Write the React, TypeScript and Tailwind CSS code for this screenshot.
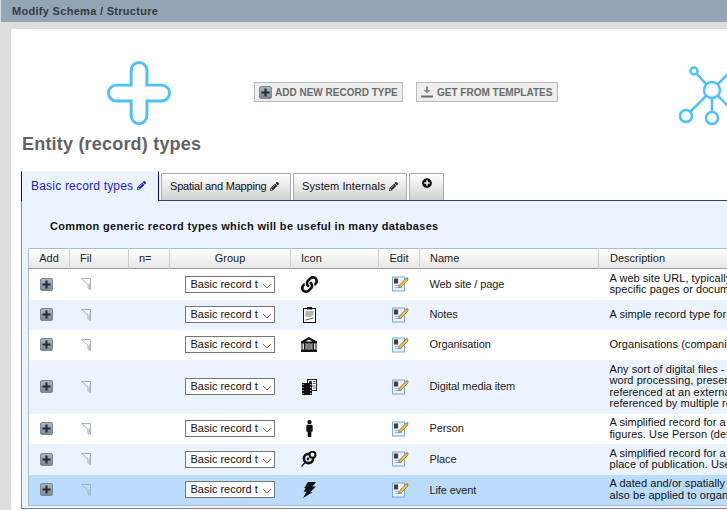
import React from "react";
import { FaLink, FaPencilAlt, FaPlusCircle, FaMale } from "react-icons/fa";

const AddIcon = ({ cls = "" }: { cls?: string }) => (
  <span className={`inline-flex w-[13px] h-[13px] shrink-0 items-center justify-center rounded-[2px] border border-[#7b8794] bg-gradient-to-b from-[#aab4bd] to-[#7f8a95] ${cls}`}>
    <svg width="9" height="9" viewBox="0 0 9 9"><path d="M3.5 0.5h2v3h3v2h-3v3h-2v-3h-3v-2h3z" fill="#1f2a33" /></svg>
  </span>
);

const FilterIcon = () => (
  <svg width="12" height="14" viewBox="0 0 12 14" className="block">
    <path d="M1.5 1.5H10.5V12.5L8 11V7.5L1.5 1.5Z" fill="none" stroke="#a3b4bb" strokeWidth="1" />
    <path d="M8.5 7.5L10 5V12L8.5 11Z" fill="#b4c5c9" />
  </svg>
);

const EditIcon = () => (
  <svg width="17" height="16" viewBox="0 0.5 17 16" className="block">
    <rect x="0.5" y="1.5" width="12" height="14" fill="#e6f0fa" stroke="#7fa9d0" />
    <rect x="2" y="3" width="4" height="5" fill="#4a3a38" />
    <path d="M3 10h7M3 12h7" stroke="#9db8d0" />
    <path d="M7 10L14 2.5L16 4.5L9 11.5L6.5 12Z" fill="#f0c040" stroke="#6d6140" strokeWidth="0.6" />
    <path d="M14 2.5L15 1.2L16.6 2.8L16 4.5Z" fill="#8a8f98" />
  </svg>
);

const NotesIcon = () => (
  <svg width="13" height="16" viewBox="0 0 13 16" className="block">
    <rect x="0.5" y="1.5" width="12" height="14" fill="#fff" stroke="#111" />
    <rect x="4" y="0" width="5" height="2.5" fill="#111" />
    <path d="M2.5 5h8M2.5 7h8M2.5 9h6" stroke="#666" />
    <path d="M2.5 13l8-2" stroke="#555" />
  </svg>
);

const BankIcon = () => (
  <svg width="16" height="15" viewBox="0 0 16 15" className="block">
    <path d="M8 0L16 4.6V6H0V4.6Z" fill="#111" />
    <path d="M8 2.4L11.5 4.4H4.5Z" fill="#fff" />
    <path d="M1 6H3.4V13H1ZM4.9 6H7V13H4.9ZM9 6H11.1V13H9ZM12.6 6H15V13H12.6Z" fill="#fff" stroke="#111" strokeWidth="1.1" />
    <rect x="0" y="13" width="16" height="2" fill="#111" />
  </svg>
);

const MediaIcon = () => (
  <svg width="15" height="16" viewBox="0 0 15 16" className="block">
    <rect x="5.5" y="0.5" width="9" height="11" fill="#fff" stroke="#222" />
    <rect x="7" y="2" width="3" height="3" fill="#333" />
    <path d="M11 2.5h2.5M11 4.5h2.5M7 7h6.5M11 9h2.5" stroke="#555" />
    <rect x="0" y="4" width="10" height="12" fill="#111" />
    <path d="M1 5v1M1 8v1M1 11v1M1 14v1M8.8 5v1M8.8 8v1M8.8 11v1M8.8 14v1" stroke="#fff" />
  </svg>
);

const PlaceIcon = () => (
  <svg width="16" height="16" viewBox="0 0 16 16" className="block">
    <circle cx="7.5" cy="7.5" r="4.6" fill="none" stroke="#111" strokeWidth="2.6" />
    <circle cx="11.5" cy="3.8" r="3" fill="#fff" stroke="#111" strokeWidth="2" />
    <circle cx="7" cy="8" r="1.4" fill="#111" />
    <path d="M4.5 11L0.5 15.5" stroke="#111" strokeWidth="1.2" />
  </svg>
);

const BoltIcon = () => (
  <svg width="13" height="16" viewBox="0 0 13 16" className="block">
    <path d="M5 0H13L9.4 4.4H13L7 10.2H9.6L0 16L3.6 9.8H0.6L2.6 6H1.2Z" fill="#111" />
  </svg>
);

const PlusOutline = () => (
  <svg width="64" height="64" viewBox="0 0 64 64" className="block shrink-0">
    <path
      d="M24 9a8 8 0 0 1 16 0V24H55a8 8 0 0 1 0 16H40V55a8 8 0 0 1-16 0V40H9a8 8 0 0 1 0-16H24Z"
      fill="none" stroke="#4dc0ff" strokeWidth="3" transform="translate(0.5 0.5) scale(0.985)"
    />
  </svg>
);

const NetworkIcon = () => (
  <svg width="70" height="64" viewBox="0 0 70 64" className="block shrink-0">
    <g fill="none" stroke="#4dc0ff" strokeWidth="2.5">
      <circle cx="34" cy="29" r="8" />
      <circle cx="16" cy="10" r="3.5" />
      <circle cx="8" cy="55" r="6" />
      <circle cx="34" cy="57" r="6" />
      <path d="M19 13L28 23M12.5 50.5L28 35M34 37V51M40 23L52 11M40 35L52 47" />
    </g>
  </svg>
);

const rows: { h: string; name: string; icon: React.ReactNode; desc: string[]; cls: string }[] = [
  { h: "h-[31px]", name: "Web site / page", icon: <FaLink size={17} color="#111" />, cls: "bg-white", desc: ["A web site URL, typically a home page, but may also be used for", "specific pages or documents on the web"] },
  { h: "h-[30px]", name: "Notes", icon: <NotesIcon />, cls: "bg-[#ebf4fe]", desc: ["A simple record type for taking notes"] },
  { h: "h-[30px]", name: "Organisation", icon: <BankIcon />, cls: "bg-white", desc: ["Organisations (companies, universities, agencies, groups)"] },
  { h: "h-[54px]", name: "Digital media item", icon: <MediaIcon />, cls: "bg-[#ebf4fe]", desc: ["Any sort of digital files - images, video, audio, PDF documents,", "word processing, presentations and other formats, either uploaded", "referenced at an external URL, which can then be", "referenced by multiple records"] },
  { h: "h-[30px]", name: "Person", icon: <FaMale size={17} color="#111" />, cls: "bg-white", desc: ["A simplified record for a person, suitable for most historical", "figures. Use Person (detailed) for more complex needs"] },
  { h: "h-[31px]", name: "Place", icon: <PlaceIcon />, cls: "bg-[#ebf4fe]", desc: ["A simplified record for a place, such as a place of birth or", "place of publication. Use Place (detailed) for more"] },
  { h: "h-[31px]", name: "Life event", icon: <BoltIcon />, cls: "bg-[#bbdcfc]", desc: ["A dated and/or spatially located event in a person's life, which can", "also be applied to organisations"] },
];

const headers: [string, string, string][] = [
  ["Add", "w-[41px]", "text-center"],
  ["Fil", "w-[59px]", "text-left pl-[10px]"],
  ["n=", "w-[41px]", "text-left pl-[10px]"],
  ["Group", "w-[121px]", "text-center"],
  ["Icon", "w-[88px]", "text-left pl-[10px]"],
  ["Edit", "w-[41px]", "text-center"],
  ["Name", "w-[179px]", "text-left pl-[10px]"],
  ["Description", "w-[500px]", "text-left pl-[11px]"],
];

const Tab = ({ label, w, track }: { label: string; w: string; track: string }) => (
  <div className={`${w} h-[28px] mb-[-1px] flex items-center pl-[8px] pb-[2px] gap-[3px] border border-b-0 border-[#aaaaaa] bg-gradient-to-b from-white to-[#cfcfcf] text-[11px] text-[#111] ${track}`}>
    <span>{label}</span>
    <FaPencilAlt size={9} color="#222" />
  </div>
);

export default function App() {
  return (
    <div className="w-[727px] h-[510px] overflow-hidden bg-[#dedede] font-['Liberation_Sans',Arial,sans-serif]">
      <div className="pl-px bg-[#dedede]">
        <div className="h-[22px] bg-[#94a5b5] pl-[11px] flex items-center text-[11px] font-bold tracking-[0.3px] text-[#333a42]">
          Modify Schema / Structure
        </div>
      </div>
      <div className="mt-[7px] ml-[11px] h-[481px] w-[800px] bg-white pl-[10px]">
        <div className="flex items-start h-[104px] pt-[32px] w-[790px]">
          <div className="ml-[86px]"><PlusOutline /></div>
          <div className="ml-[83px] mt-[21px] flex gap-[13px]">
            <button className="w-[149px] h-[20px] border border-[#bbbbbb] bg-[#eeeeee] flex items-center pl-[4px] gap-[3px] text-[10px] font-bold text-[#6b6b6b] whitespace-nowrap">
              <AddIcon /> <span>ADD NEW RECORD TYPE</span>
            </button>
            <button className="w-[142px] h-[20px] border border-[#bbbbbb] bg-[#eeeeee] flex items-center pl-[4px] gap-[4px] text-[10px] font-bold text-[#6b6b6b] whitespace-nowrap">
              <svg width="12" height="12" viewBox="0 0 12 12" className="shrink-0"><path d="M5 0.5h2V4h2.5L6 7.5 2.5 4H5Z" fill="#8a8a8a" /><rect y="9.5" width="12" height="2" fill="#6d6d6d" /></svg>
              <span>GET FROM TEMPLATES</span>
            </button>
          </div>
          <div className="ml-[120px]"><NetworkIcon /></div>
        </div>
        <h1 className="h-[37px] pl-px text-[18px] leading-[22px] font-bold tracking-[0.2px] text-[#626268]">Entity (record) types</h1>
        <div className="flex items-end gap-[2px] h-[30px] relative">
          <div className="w-[138px] h-[30px] mb-[-1px] relative z-10 flex items-center pl-[9px] gap-[4px] pb-[2px] border border-[#0000cc] border-t-[#ebf4fe] border-b-0 bg-[#ebf4fe] text-[12px] text-[#1a1ae6] tracking-[0.2px]">
            <span>Basic record types</span>
            <FaPencilAlt size={9} color="#1a1ae6" />
          </div>
          <Tab label="Spatial and Mapping" w="w-[130px]" track="tracking-[-0.2px]" />
          <Tab label="System Internals" w="w-[114px]" track="tracking-[0.1px]" />
          <div className="w-[35px] h-[28px] mb-[-1px] flex justify-center pt-[4px] border border-b-0 border-[#aaaaaa] bg-gradient-to-b from-white to-[#cfcfcf]">
            <FaPlusCircle size={10} color="#111" />
          </div>
        </div>
        <div className="relative w-[779px] border-t border-t-[#30415a] border-l border-b border-l-[#8a8f96] border-b-[#808080] bg-[#ebf4fe] pl-[6px] h-[309px]">
          <div className="h-[47px] pl-[22px] pt-[18px] text-[11px] leading-[14px] font-bold text-[#111] tracking-[0.33px]">
            Common generic record types which will be useful in many databases
          </div>
          <table className="table-fixed w-[1071px] border-collapse border border-[#a9bcd0] text-[11px] text-[#222]">
            <thead>
              <tr className="h-[20px] bg-gradient-to-b from-white to-[#e6e6e6] border-b border-[#999999]">
                {headers.map(([t, w, a]) => (
                  <th key={t} className={`${w} ${a} font-normal border-r border-[#cccccc] p-0`}>{t}</th>
                ))}
              </tr>
            </thead>
            <tbody>
              {rows.map((r) => (
                <tr key={r.name} className={`${r.h} ${r.cls}`}>
                  <td className="p-0 pr-[6px]"><div className="flex justify-center"><AddIcon /></div></td>
                  <td className="p-0 pl-[10px]"><FilterIcon /></td>
                  <td className="p-0"></td>
                  <td className="p-0">
                    <div className="relative w-[90px] ml-[15px]">
                      <select defaultValue="b" className="block w-[90px] h-[17px] appearance-none rounded-none border border-[#767676] bg-white pl-[5px] pr-[16px] text-[11px] text-[#111] leading-[15px]">
                        <option value="b">Basic record types</option>
                      </select>
                      <svg width="10" height="6" viewBox="0 0 10 6" className="absolute right-[3px] top-[7px] pointer-events-none"><path d="M1 1l4 4 4-4" fill="none" stroke="#555" strokeWidth="0.9" /></svg>
                    </div>
                  </td>
                  <td className="p-0 pl-[10px]"><div className="w-[17px] flex justify-center">{r.icon}</div></td>
                  <td className="p-0"><div className="ml-[13px]"><EditIcon /></div></td>
                  <td className="p-0 pl-[10px] tracking-[-0.1px]">{r.name}</td>
                  <td className="p-0 pl-[11px] leading-[11.33px] text-[#111] tracking-[0.05px]">
                    {r.desc.map((d) => <div key={d} className="whitespace-nowrap">{d}</div>)}
                  </td>
                </tr>
              ))}
            </tbody>
          </table>
        </div>
      </div>
    </div>
  );
}
